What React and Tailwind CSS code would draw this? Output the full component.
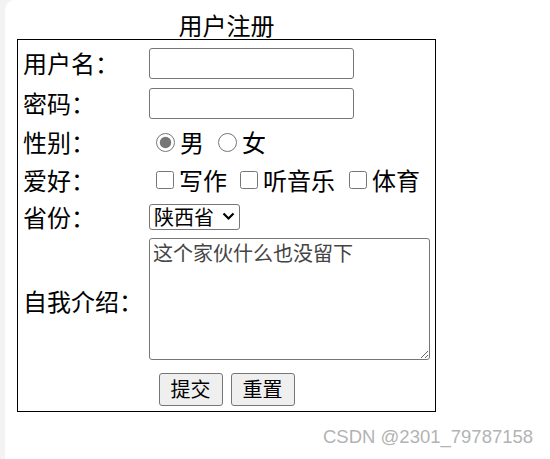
import { useState } from "react";

const labelCls = "w-[131px] pl-[5px] text-[24px] leading-none shrink-0";

const Row = ({ label, h, children, labelCls2 = "" }) => (
  <div className={`flex items-center ${h}`}>
    <div className={`${labelCls} ${labelCls2}`}>{label}</div>
    <div className="flex items-center">{children}</div>
  </div>
);

export default function App() {
  const [gender, setGender] = useState("男");

  return (
    <div
      className="min-h-[459px] bg-[#f3f3f3] flex"
      style={{ fontFamily: '"Noto Sans CJK SC", "Noto Sans", sans-serif' }}
    >
      <div className="flex-1 ml-[5px] bg-white rounded-tl-[10px] relative text-black">
        <div className="w-[419px] ml-[12px]">
          <div className="h-[39px] pt-[10px] text-center text-[24px] leading-[29px]">用户注册</div>

          <form className="border border-black h-[373px] flex flex-col pt-[3px]" onSubmit={(e) => e.preventDefault()}>
            <Row label="用户名：" h="h-[40px]">
              <input type="text" className="w-[205px] h-[31px] border border-[#767676] rounded-[3px] px-1 text-[20px] outline-none" />
            </Row>
            <Row label="密码：" h="h-[40px]">
              <input type="password" className="w-[205px] h-[31px] border border-[#767676] rounded-[3px] px-1 text-[20px] outline-none" />
            </Row>
            <Row label="性别：" h="h-[38px]">
              <label className="flex items-center text-[24px] leading-none">
                <input
                  type="radio"
                  name="gender"
                  checked={gender === "男"}
                  onChange={() => setGender("男")}
                  className="w-[19px] h-[19px] m-0 ml-[7px] mr-[5px] accent-[#767676]"
                />
                男
              </label>
              <label className="flex items-center text-[24px] leading-none">
                <input
                  type="radio"
                  name="gender"
                  checked={gender === "女"}
                  onChange={() => setGender("女")}
                  className="w-[19px] h-[19px] m-0 ml-[14px] mr-[5px] accent-[#767676]"
                />
                女
              </label>
            </Row>
            <Row label="爱好：" h="h-[38px]">
              <label className="flex items-center text-[24px] leading-none">
                <input type="checkbox" className="w-[18px] h-[18px] m-0 ml-[7px] mr-[5px] accent-[#767676]" />
                写作
              </label>
              <label className="flex items-center text-[24px] leading-none">
                <input type="checkbox" className="w-[18px] h-[18px] m-0 ml-[13px] mr-[5px] accent-[#767676]" />
                听音乐
              </label>
              <label className="flex items-center text-[24px] leading-none">
                <input type="checkbox" className="w-[18px] h-[18px] m-0 ml-[14px] mr-[5px] accent-[#767676]" />
                体育
              </label>
            </Row>
            <Row label="省份：" h="h-[35px]">
              <div className="relative">
                <select className="appearance-none w-[91px] h-[26px] border border-[#767676] rounded-[3px] pl-[4px] text-[20px] leading-none bg-white outline-none">
                  <option>陕西省</option>
                  <option>北京市</option>
                  <option>上海市</option>
                </select>
                <svg className="absolute right-[5px] top-[8px] pointer-events-none" width="13" height="9" viewBox="0 0 13 9">
                  <path d="M1.5 1.5 L6.5 6.5 L11.5 1.5" fill="none" stroke="black" strokeWidth="2.2" />
                </svg>
              </div>
            </Row>
            <Row label="自我介绍：" h="h-[129px]" labelCls2="pt-[5px]">
              <textarea
                defaultValue="这个家伙什么也没留下"
                className="w-[281px] h-[122px] border border-[#767676] rounded-[3px] px-[3px] pt-[2px] text-[20px] leading-[24px] text-[#444] outline-none"
              />
            </Row>
            <div className="flex-1 flex items-center justify-center gap-[8px] pt-[4px]">
              <button type="submit" className="w-[64px] h-[33px] bg-[#efefef] border border-[#767676] rounded-[3px] text-[20px] leading-none">
                提交
              </button>
              <button type="reset" className="w-[64px] h-[33px] bg-[#efefef] border border-[#767676] rounded-[3px] text-[20px] leading-none">
                重置
              </button>
            </div>
          </form>
        </div>

        <div
          className="absolute left-[318px] top-[428px] text-[18.5px] text-[#b3b3b3] leading-none"
          style={{ fontFamily: '"Liberation Sans", Arial, sans-serif' }}
        >
          CSDN @2301_79787158
        </div>
      </div>
    </div>
  );
}
